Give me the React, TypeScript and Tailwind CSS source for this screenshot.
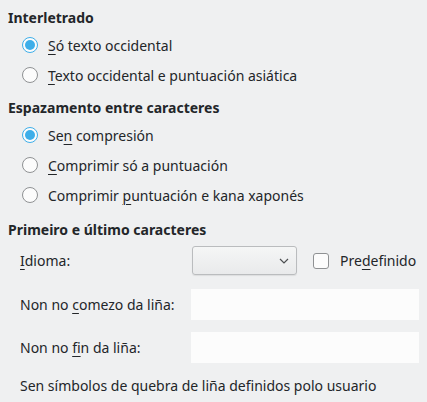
import React from "react";

function U({ children }: { children: React.ReactNode }) {
  return <span className="underline underline-offset-[3px] decoration-1">{children}</span>;
}

function Radio({ checked, children }: { checked?: boolean; children: React.ReactNode }) {
  return (
    <div className="flex items-center h-[30px] pl-[22px]">
      {checked ? (
        <svg width="16" height="16" viewBox="0 0 16 16">
          <circle cx="8" cy="8" r="7.5" fill="#fcfcfc" stroke="#3daee9" />
          <circle cx="8" cy="8" r="5" fill="#3daee9" />
        </svg>
      ) : (
        <svg width="16" height="16" viewBox="0 0 16 16">
          <circle cx="8" cy="8" r="7.5" fill="#fcfcfc" stroke="#8f9193" />
        </svg>
      )}
      <span className="ml-[10px] text-[14px] text-[#232629]">{children}</span>
    </div>
  );
}

export default function App() {
  return (
    <div className="w-[427px] h-[402px] bg-[#eff0f1] text-[#232629] overflow-hidden font-['Noto_Sans',sans-serif]">
      <div className="flex flex-col pt-[7px]">
        <div className="h-[20px] flex items-center pl-[8px] text-[14px] font-bold">Interletrado</div>
        <div className="mt-[3px]">
          <Radio checked>
            <U>S</U>ó texto occidental
          </Radio>
          <Radio>
            <U>T</U>exto occidental e puntuación asiática
          </Radio>
        </div>
        <div className="mt-[7px] h-[20px] flex items-center pl-[8px] text-[14px] font-bold">Espazamento entre caracteres</div>
        <div className="mt-[3px]">
          <Radio checked>
            Se<U>n</U> compresión
          </Radio>
          <Radio>
            <U>C</U>omprimir só a puntuación
          </Radio>
          <Radio>
            Comprimir <U>p</U>untuación e kana xaponés
          </Radio>
        </div>
        <div className="mt-[9px] h-[20px] flex items-center pl-[8px] text-[14px] font-bold">Primeiro e último caracteres</div>
        <div className="mt-[7px] flex items-center h-[29px] pl-[20px] text-[14px]">
          <div className="w-[172px]">
            <U>I</U>dioma:
          </div>
          <div className="w-[105px] h-[29px] rounded-[3px] border border-[#babcbe] bg-gradient-to-b from-[#f5f6f6] to-[#e9eaeb] flex items-center justify-end pr-[7px] shadow-[0_1px_1px_rgba(0,0,0,0.08)]">
            <svg width="10" height="6" viewBox="0 0 10 6">
              <path d="M1 1 L5 5 L9 1" fill="none" stroke="#4d4f51" strokeWidth="1.2" />
            </svg>
          </div>
          <div className="ml-[16px] w-[16px] h-[16px] rounded-[3px] border border-[#8f9193] bg-[#fcfcfc]" />
          <div className="ml-[11px]">
            Pre<U>d</U>efinido
          </div>
        </div>
        <div className="mt-[14px] flex items-center h-[31px] pl-[20px] text-[14px]">
          <div className="w-[171px]">
            Non no <U>c</U>omezo da liña:
          </div>
          <div className="w-[228px] h-[31px] bg-[#fcfcfc]" />
        </div>
        <div className="mt-[12px] flex items-center h-[31px] pl-[20px] text-[14px]">
          <div className="w-[171px]">
            Non no <U>f</U>in da liña:
          </div>
          <div className="w-[228px] h-[31px] bg-[#fcfcfc]" />
        </div>
        <div className="mt-[12px] h-[20px] flex items-center pl-[20px] text-[14px]">
          Sen símbolos de quebra de liña definidos polo usuario
        </div>
      </div>
    </div>
  );
}
